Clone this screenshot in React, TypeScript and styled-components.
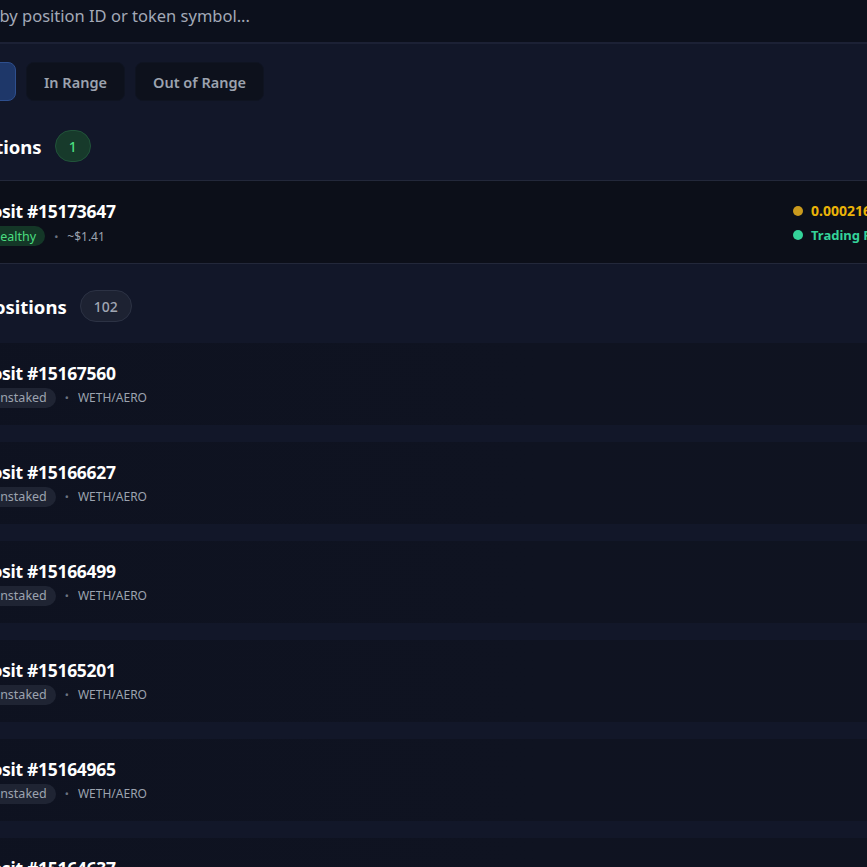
import styled, { createGlobalStyle } from 'styled-components';

const GlobalStyle = createGlobalStyle`
  html, body {
    margin: 0;
    padding: 0;
    background: #121729;
    overflow: hidden;
  }
  body {
    font-family: "Noto Sans", "Open Sans", sans-serif;
    -webkit-font-smoothing: antialiased;
  }
`;

const Page = styled.div`
  width: 867px;
  height: 867px;
  overflow: hidden;
`;

// the captured area starts partway into the panel, so the panel runs past both edges
const Shell = styled.div`
  width: 1100px;
  margin-left: -120px;
  display: flex;
  flex-direction: column;
`;

const SearchBar = styled.div`
  height: 44px;
  box-sizing: border-box;
  padding: 0 0 12px 63px;
  display: flex;
  align-items: center;
  background: #0c101c;
  border-bottom: 2px solid #1c2135;
  color: #a3a9b7;
  font-size: 16.5px;
`;

const FilterBar = styled.div`
  display: flex;
  gap: 10px;
  padding: 18px 0 0 82px;
`;

const FilterButton = styled.button<{ active?: boolean }>`
  height: 39px;
  padding: 0 17px;
  border-radius: 8px;
  font-family: inherit;
  font-size: 14.5px;
  font-weight: 600;
  color: ${(p) => (p.active ? '#e6edff' : '#9ca3af')};
  background: ${(p) => (p.active ? '#1e3769' : '#0d111c')};
  border: 1px solid ${(p) => (p.active ? '#2e4f8e' : '#0f1421')};
`;

const SectionHeader = styled.div<{ top: number }>`
  height: 79px;
  box-sizing: border-box;
  padding: ${(p) => p.top}px 0 0 9px;
  display: flex;
  align-items: center;
  gap: 13px;
`;

const HeaderTitle = styled.h2`
  margin: 0;
  font-size: 18.5px;
  font-weight: 700;
  color: #ffffff;
`;

const CountBadge = styled.span<{ tone: 'green' | 'gray' }>`
  height: 32px;
  min-width: 35px;
  box-sizing: border-box;
  padding: 0 13px;
  border-radius: 16px;
  display: inline-flex;
  align-items: center;
  justify-content: center;
  font-size: 14px;
  font-weight: 500;
  color: ${(p) => (p.tone === 'green' ? '#4ade80' : '#a0a6b3')};
  background: ${(p) => (p.tone === 'green' ? '#173a2b' : '#1d2232')};
  border: 1px solid ${(p) => (p.tone === 'green' ? '#21533a' : '#2c3244')};
`;

const StakedRow = styled.div`
  height: 84px;
  box-sizing: border-box;
  padding: 1px 17px 0 78px;
  display: flex;
  align-items: center;
  justify-content: space-between;
  background: #0c0f19;
  border-top: 1px solid #23283a;
  border-bottom: 1px solid #23283a;
`;

const RowList = styled.div`
  display: flex;
  flex-direction: column;
  gap: 17px;
`;

const PositionRow = styled.div`
  height: 82px;
  box-sizing: border-box;
  padding: 0 0 0 78px;
  display: flex;
  align-items: center;
  background: linear-gradient(90deg, #0e1220 0%, #0f1321 60%, #0f1320 100%);
`;

const Info = styled.div`
  display: flex;
  flex-direction: column;
  gap: 3px;
`;

const Title = styled.div`
  font-size: 17.5px;
  font-weight: 700;
  color: #ffffff;
  letter-spacing: -0.3px;
`;

const Meta = styled.div`
  display: flex;
  align-items: center;
  gap: 9px;
  padding-left: 24px;
  font-size: 12px;
  color: #9ca3af;
`;

const Pill = styled.span<{ tone: 'green' | 'gray' }>`
  height: 20px;
  padding: 0 9px;
  border-radius: 10px;
  display: inline-flex;
  align-items: center;
  font-size: 12.5px;
  color: ${(p) => (p.tone === 'green' ? '#4ade80' : '#9ca3af')};
  background: ${(p) => (p.tone === 'green' ? '#143727' : '#1f2433')};
`;

const Sep = styled.span`
  color: #6b7280;
  font-size: 11px;
`;

const Rewards = styled.div`
  width: 170px;
  display: flex;
  flex-direction: column;
  gap: 6px;
`;

const RewardLine = styled.div<{ accent: string; size: number }>`
  display: flex;
  align-items: center;
  gap: 8px;
  font-weight: 700;
  font-size: ${(p) => p.size}px;
  color: ${(p) => p.accent};
  white-space: nowrap;
`;

const Dot = styled.span<{ color: string }>`
  width: 10px;
  height: 10px;
  border-radius: 50%;
  background: ${(p) => p.color};
  flex: none;
`;

const unstaked = ['15167560', '15166627', '15166499', '15165201', '15164965', '15164637'];

export default function App() {
  return (
    <Page>
      <GlobalStyle />
      <Shell>
        <SearchBar>Search by position ID or token symbol...</SearchBar>
        <FilterBar>
          <FilterButton active>All</FilterButton>
          <FilterButton>In Range</FilterButton>
          <FilterButton>Out of Range</FilterButton>
        </FilterBar>

        <SectionHeader top={11}>
          <HeaderTitle>Staked Positions</HeaderTitle>
          <CountBadge tone="green">1</CountBadge>
        </SectionHeader>
        <StakedRow>
          <Info>
            <Title>Deposit #15173647</Title>
            <Meta>
              <Pill tone="green">Healthy</Pill>
              <Sep>•</Sep>
              <span>~$1.41</span>
            </Meta>
          </Info>
          <Rewards>
            <RewardLine accent="#eab308" size={14}>
              <Dot color="#ca9a1d" />
              0.000216 AERO
            </RewardLine>
            <RewardLine accent="#34d399" size={13}>
              <Dot color="#34d399" />
              Trading Fees
            </RewardLine>
          </Rewards>
        </StakedRow>

        <SectionHeader top={5}>
          <HeaderTitle>Unstaked Positions</HeaderTitle>
          <CountBadge tone="gray">102</CountBadge>
        </SectionHeader>
        <RowList>
          {unstaked.map((id) => (
            <PositionRow key={id}>
              <Info>
                <Title>Deposit #{id}</Title>
                <Meta>
                  <Pill tone="gray">Unstaked</Pill>
                  <Sep>•</Sep>
                  <span>WETH/AERO</span>
                </Meta>
              </Info>
            </PositionRow>
          ))}
        </RowList>
      </Shell>
    </Page>
  );
}
